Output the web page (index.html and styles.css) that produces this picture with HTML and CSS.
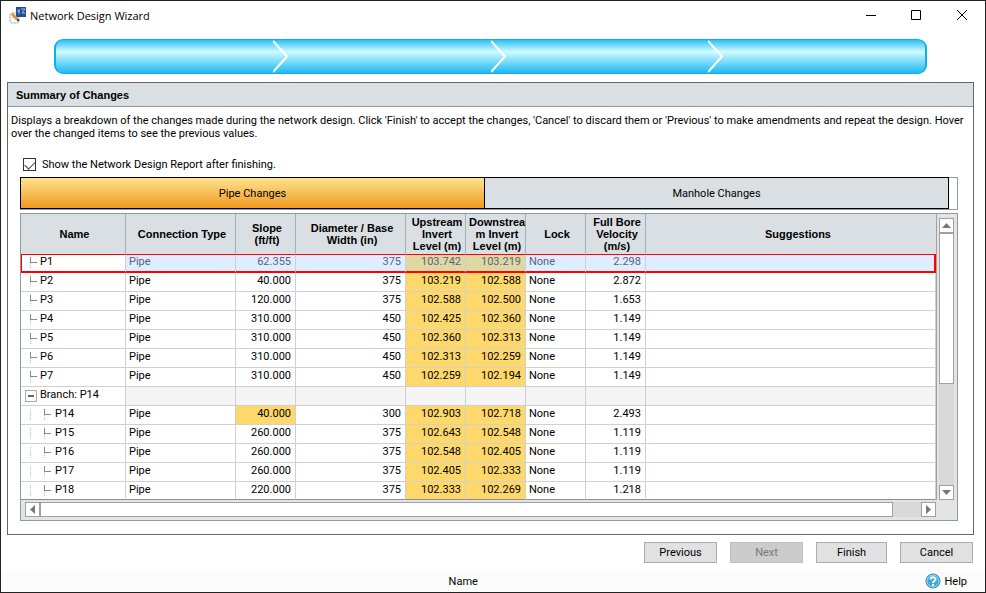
FILE: index.html
```html
<!DOCTYPE html>
<html lang="en">
<head>
    <meta charset="UTF-8">
    <meta name="viewport" content="width=device-width, initial-scale=1.0">
    <title>Network Design Wizard</title>
    <link rel="stylesheet" href="styles.css">
</head>
<body>
    <div class="window">
        <header class="title-bar">
            <svg class="app-icon" width="17" height="17" viewBox="0 0 17 17">
                <rect x="1" y="6" width="9" height="10" rx="2" fill="#f8f8f8" stroke="#999" stroke-dasharray="2 1"/>
                <rect x="7" y="0" width="10" height="10" fill="#1d4f91"/>
                <path d="M10 2v5M8 4h3M12 2h4l-3 4h3" fill="none" stroke="#9fc4ea"/>
                <path d="M3 7l5 5" stroke="#e0962e" stroke-width="3"/>
                <path d="M8 12l2 2" stroke="#3f4a55" stroke-width="2"/>
            </svg>
            <h1 class="title">Network Design Wizard</h1>
            <button class="window-button" aria-label="Minimize"><svg width="12" height="12"><path d="M0 6.500h10" stroke="#000"/></svg></button>
            <button class="window-button" aria-label="Maximize"><svg width="12" height="12"><path d="M.5 1.500h9v9h-9z" fill="none" stroke="#000"/></svg></button>
            <button class="window-button" aria-label="Close"><svg width="12" height="12"><path d="M1 1l10 10M11 1L1 11" stroke="#000"/></svg></button>
        </header>

        <div class="steps">
            <div class="step"></div>
            <div class="step"><svg width="16" height="33" viewBox="0 0 16 33"><path d="M0 1l14 15.500L0 32" fill="none" stroke="#fff" stroke-width="2"/></svg></div>
            <div class="step"><svg width="16" height="33" viewBox="0 0 16 33"><path d="M0 1l14 15.500L0 32" fill="none" stroke="#fff" stroke-width="2"/></svg></div>
            <div class="step"><svg width="16" height="33" viewBox="0 0 16 33"><path d="M0 1l14 15.500L0 32" fill="none" stroke="#fff" stroke-width="2"/></svg></div>
        </div>

        <main class="panel">
            <h2 class="panel-title">Summary of Changes</h2>
            <p class="description">Displays a breakdown of the changes made during the network design. Click 'Finish' to accept the changes, 'Cancel' to discard them or 'Previous' to make amendments and repeat the design. Hover over the changed items to see the previous values.</p>

            <div class="content">
                <div class="option">
                    <input type="checkbox" id="show-report" class="check" checked>
                    <label for="show-report">Show the Network Design Report after finishing.</label>
                </div>

                <div class="tabs">
                    <button class="tab tab-active">Pipe Changes</button>
                    <button class="tab">Manhole Changes</button>
                </div>

                <div class="grid">
                    <div class="grid-top">
                        <table class="changes">
                            <colgroup>
                                <col class="col-name">
                                <col class="col-type">
                                <col class="col-small">
                                <col class="col-type">
                                <col class="col-small">
                                <col class="col-small">
                                <col class="col-small">
                                <col class="col-small">
                                <col>
                            </colgroup>
                            <thead>
                                <tr>
                                    <th>Name</th>
                                    <th>Connection Type</th>
                                    <th>Slope<br>(ft/ft)</th>
                                    <th>Diameter / Base<br>Width (in)</th>
                                    <th>Upstream<br>Invert<br>Level (m)</th>
                                    <th>Downstrea<br>m Invert<br>Level (m)</th>
                                    <th>Lock</th>
                                    <th>Full Bore<br>Velocity<br>(m/s)</th>
                                    <th>Suggestions</th>
                                </tr>
                            </thead>
                            <tbody>
                                <tr class="selected"><td class="leaf">P1</td><td>Pipe</td><td class="num">62.355</td><td class="num">375</td><td class="num changed">103.742</td><td class="num changed">103.219</td><td>None</td><td class="num">2.298</td><td></td></tr>
                                <tr><td class="leaf">P2</td><td>Pipe</td><td class="num">40.000</td><td class="num">375</td><td class="num changed">103.219</td><td class="num changed">102.588</td><td>None</td><td class="num">2.872</td><td></td></tr>
                                <tr><td class="leaf">P3</td><td>Pipe</td><td class="num">120.000</td><td class="num">375</td><td class="num changed">102.588</td><td class="num changed">102.500</td><td>None</td><td class="num">1.653</td><td></td></tr>
                                <tr><td class="leaf">P4</td><td>Pipe</td><td class="num">310.000</td><td class="num">450</td><td class="num changed">102.425</td><td class="num changed">102.360</td><td>None</td><td class="num">1.149</td><td></td></tr>
                                <tr><td class="leaf">P5</td><td>Pipe</td><td class="num">310.000</td><td class="num">450</td><td class="num changed">102.360</td><td class="num changed">102.313</td><td>None</td><td class="num">1.149</td><td></td></tr>
                                <tr><td class="leaf">P6</td><td>Pipe</td><td class="num">310.000</td><td class="num">450</td><td class="num changed">102.313</td><td class="num changed">102.259</td><td>None</td><td class="num">1.149</td><td></td></tr>
                                <tr><td class="leaf">P7</td><td>Pipe</td><td class="num">310.000</td><td class="num">450</td><td class="num changed">102.259</td><td class="num changed">102.194</td><td>None</td><td class="num">1.149</td><td></td></tr>
                                <tr class="branch"><td class="node"><button class="collapse" aria-label="Collapse"></button>Branch: P14</td><td></td><td></td><td></td><td></td><td></td><td></td><td></td><td></td></tr>
                                <tr><td class="leaf child">P14</td><td>Pipe</td><td class="num changed">40.000</td><td class="num">300</td><td class="num changed">102.903</td><td class="num changed">102.718</td><td>None</td><td class="num">2.493</td><td></td></tr>
                                <tr><td class="leaf child">P15</td><td>Pipe</td><td class="num">260.000</td><td class="num">375</td><td class="num changed">102.643</td><td class="num changed">102.548</td><td>None</td><td class="num">1.119</td><td></td></tr>
                                <tr><td class="leaf child">P16</td><td>Pipe</td><td class="num">260.000</td><td class="num">375</td><td class="num changed">102.548</td><td class="num changed">102.405</td><td>None</td><td class="num">1.119</td><td></td></tr>
                                <tr><td class="leaf child">P17</td><td>Pipe</td><td class="num">260.000</td><td class="num">375</td><td class="num changed">102.405</td><td class="num changed">102.333</td><td>None</td><td class="num">1.119</td><td></td></tr>
                                <tr><td class="leaf child">P18</td><td>Pipe</td><td class="num">220.000</td><td class="num">375</td><td class="num changed">102.333</td><td class="num changed">102.269</td><td>None</td><td class="num">1.218</td><td></td></tr>
                            </tbody>
                        </table>
                        <div class="scroll-v">
                            <button class="arrow" aria-label="Scroll up"><svg width="9" height="5"><path d="M0 5L4.500 0L9 5z" fill="#777"/></svg></button>
                            <div class="thumb-v"></div>
                            <div class="track"></div>
                            <button class="arrow" aria-label="Scroll down"><svg width="9" height="5"><path d="M0 0L4.500 5L9 0z" fill="#777"/></svg></button>
                        </div>
                    </div>
                    <div class="scroll-h">
                        <button class="arrow" aria-label="Scroll left"><svg width="5" height="9"><path d="M5 0L0 4.500L5 9z" fill="#777"/></svg></button>
                        <div class="thumb-h"></div>
                        <div class="track-h"></div>
                        <button class="arrow" aria-label="Scroll right"><svg width="5" height="9"><path d="M0 0L5 4.500L0 9z" fill="#777"/></svg></button>
                    </div>
                </div>
            </div>
        </main>

        <div class="buttons">
            <button class="button">Previous</button>
            <button class="button" disabled>Next</button>
            <button class="button button-finish">Finish</button>
            <button class="button">Cancel</button>
        </div>

        <footer class="status-bar">
            <span class="status">Name</span>
            <a class="help" href="#">
                <svg width="16" height="16" viewBox="0 0 16 16">
                    <circle cx="8" cy="8" r="7" fill="#3fa9dc" stroke="#2b7fb5"/>
                    <circle cx="8" cy="8" r="6" fill="none" stroke="#a5dbf5"/>
                    <path d="M5.500 6.500C5.500 3.500 10.500 3.500 10.500 6.300C10.500 8 8 8 8 10M8 11v2" fill="none" stroke="#fff" stroke-width="2"/>
                </svg>
                Help
            </a>
        </footer>
    </div>
</body>
</html>
```
FILE: styles.css
```css
* {
    box-sizing: border-box;
}
body {
    margin: 0;
    font-family: Roboto, "Liberation Sans", sans-serif;
    font-size: 11px;
    line-height: 13px;
    color: #000;
    background-color: #fff;
}
button {
    font: inherit;
    color: inherit;
    margin: 0;
    padding: 0;
}
svg {
    display: block;
}
.window {
    display: flex;
    flex-direction: column;
    min-height: 100vh;
    border: 1px solid #222;
}

/* title bar */
.title-bar {
    display: flex;
    align-items: center;
    height: 28px;
    padding: 0 1px 0 8px;
}
.app-icon {
    margin-right: 4px;
}
.title {
    flex: 1;
    margin: 0;
    font-family: "Open Sans", sans-serif;
    font-size: 11px;
    font-weight: normal;
}
.window-button {
    display: flex;
    align-items: center;
    justify-content: center;
    width: 45px;
    height: 28px;
    border: none;
    background: none;
}

/* wizard steps */
.steps {
    display: flex;
    height: 35px;
    margin: 10px 58px 8px 53px;
    border: 2px solid #0ab0f0;
    border-width: 1px 2px;
    border-radius: 9px;
    background: linear-gradient(#2ec0f6, #d2fbff 36%, #a6ecff 50%, #1fb8f3);
}
.step {
    flex: 1;
}

/* main panel */
.panel {
    margin: 0 11px 0 6px;
    border: 1px solid #666;
    padding-bottom: 13px;
}
.panel-title {
    margin: 0;
    padding: 1px 8px 0;
    border-bottom: 1px solid #8f9aa1;
    background-color: #d9dfe3;
    font-family: "Liberation Sans", Arial, sans-serif;
    font-size: 11px;
    line-height: 22px;
}
.description {
    margin: 0;
    padding: 7px 0 0 3px;
}
.content {
    padding: 18px 15px 0 12px;
}
.option {
    display: flex;
    align-items: center;
    gap: 6px;
    padding-left: 3px;
}
.check {
    appearance: none;
    width: 13px;
    height: 13px;
    margin: 0;
    border: 1px solid #333;
    background-color: #fff;
}
.check:checked::before {
    content: "";
    display: block;
    width: 9px;
    height: 5px;
    margin: 2px 1px;
    border: solid #444;
    border-width: 0 0 1px 1px;
    transform: rotate(-45deg);
}
.tabs {
    display: flex;
    height: 33px;
    margin-top: 6px;
    padding-right: 8px;
    border: 1px solid #8f9aa1;
    border-width: 0 1px 1px 0;
    background: linear-gradient(#8f9aa1, #8f9aa1) top / 100% 1px no-repeat;
}
.tab {
    flex: 1;
    border: 1px solid #000;
    background-color: #d9dfe3;
}
.tab + .tab {
    border-left: none;
}
.tab-active {
    background: linear-gradient(#fde390, #f09a1f);
}

/* grid of changes */
.grid {
    margin-top: 3px;
    border: 1px solid #8f9aa1;
    background-color: #e4e4e4;
}
.grid-top {
    display: flex;
}
.changes {
    flex: 1;
    width: 100%;
    table-layout: fixed;
    border-spacing: 0;
    background-color: #fff;
}
.col-name {
    width: 105px;
}
.col-type {
    width: 110px;
}
.col-small {
    width: 60px;
}
th {
    height: 40px;
    padding: 0 0 0 3px;
    border-right: 1px solid #a9afb3;
    background-color: #d9dfe3;
    font-family: "Liberation Sans", Arial, sans-serif;
    line-height: 12px;
    white-space: nowrap;
}
th:last-child {
    padding-left: 14px;
    border-right: none;
}
td {
    height: 19px;
    padding: 0 3px 3px 3px;
    border: solid #d0d0d0;
    border-width: 0 1px 1px 0;
    white-space: nowrap;
}
.num {
    padding-right: 4px;
    text-align: right;
}
.changed {
    background-color: #ffd86b;
}
.leaf {
    padding-left: 19px;
    background: linear-gradient(#888, #888) 9px 8px / 7px 1px no-repeat,
        linear-gradient(#888, #888) 9px 3px / 1px 6px no-repeat,
        repeating-linear-gradient(#bbb 0 1px, transparent 1px 2px) 9px 9px / 1px 6px no-repeat;
}
.child {
    padding-left: 34px;
    background: linear-gradient(#888, #888) 23px 8px / 7px 1px no-repeat,
        linear-gradient(#888, #888) 23px 3px / 1px 6px no-repeat,
        repeating-linear-gradient(#bbb 0 1px, transparent 1px 2px) 23px 9px / 1px 6px no-repeat,
        repeating-linear-gradient(#bbb 0 1px, transparent 1px 2px) 9px 3px / 1px 12px no-repeat;
}
.node {
    position: relative;
    padding-left: 19px;
}
.branch td + td {
    background-color: #f4f4f4;
}
.collapse {
    position: absolute;
    top: 3px;
    left: 4px;
    width: 12px;
    height: 12px;
    border: 1px solid #aaa;
    background: linear-gradient(#666, #666) center / 6px 2px no-repeat #fff;
}
.selected td {
    border-top: 1px solid #f00;
    border-bottom: 2px solid #f00;
}
.selected td:first-child {
    border-left: 1px solid #f00;
    padding-left: 18px;
    background-position: 8px 7px, 8px 2px, 8px 8px;
}
.selected td:last-child {
    border-right: 2px solid #f00;
}
.selected td + td {
    background-color: #deedff;
    color: #5a627c;
}
.selected td.changed {
    background-color: #dfd8a5;
}
tbody tr:last-child td {
    height: 18px;
    padding-bottom: 2px;
    border-bottom-color: #8a8f92;
}

/* scroll bars */
.scroll-v {
    display: flex;
    flex-direction: column;
    width: 21px;
    padding: 4px 3px 0 2px;
    border-left: 1px solid #a0a0a0;
}
.scroll-h {
    display: flex;
    height: 20px;
    padding: 2px 21px 3px 4px;
}
.arrow {
    display: flex;
    flex: none;
    align-items: center;
    justify-content: center;
    width: 15px;
    height: 15px;
    border: 1px solid #a0a0a0;
    background-color: #fff;
}
.thumb-v {
    width: 15px;
    height: 151px;
    border: 1px solid #a0a0a0;
    background-color: #fff;
}
.track {
    flex: 1;
    width: 15px;
    background-color: #d9d9d9;
}
.thumb-h {
    flex: 1;
    height: 15px;
    border: 1px solid #a0a0a0;
    background-color: #fff;
}
.track-h {
    width: 28px;
    height: 15px;
    background-color: #d9d9d9;
}

/* wizard buttons */
.buttons {
    display: flex;
    justify-content: flex-end;
    gap: 13px;
    padding: 7px 12px;
}
.button {
    width: 73px;
    height: 21px;
    border: 1px solid #adadad;
    background-color: #e1e1e1;
}
.button-finish {
    width: 71px;
}
.button:disabled {
    border-color: #bfbfbf;
    background-color: #ccc;
    color: #777;
}

/* status bar */
.status-bar {
    display: flex;
    flex: 1;
    align-items: center;
    background-color: #fcfcfc;
}
.status {
    flex: 1;
    text-align: center;
}
.help {
    display: flex;
    align-items: center;
    gap: 3px;
    padding-right: 18px;
    color: #000;
    text-decoration: none;
}
```
